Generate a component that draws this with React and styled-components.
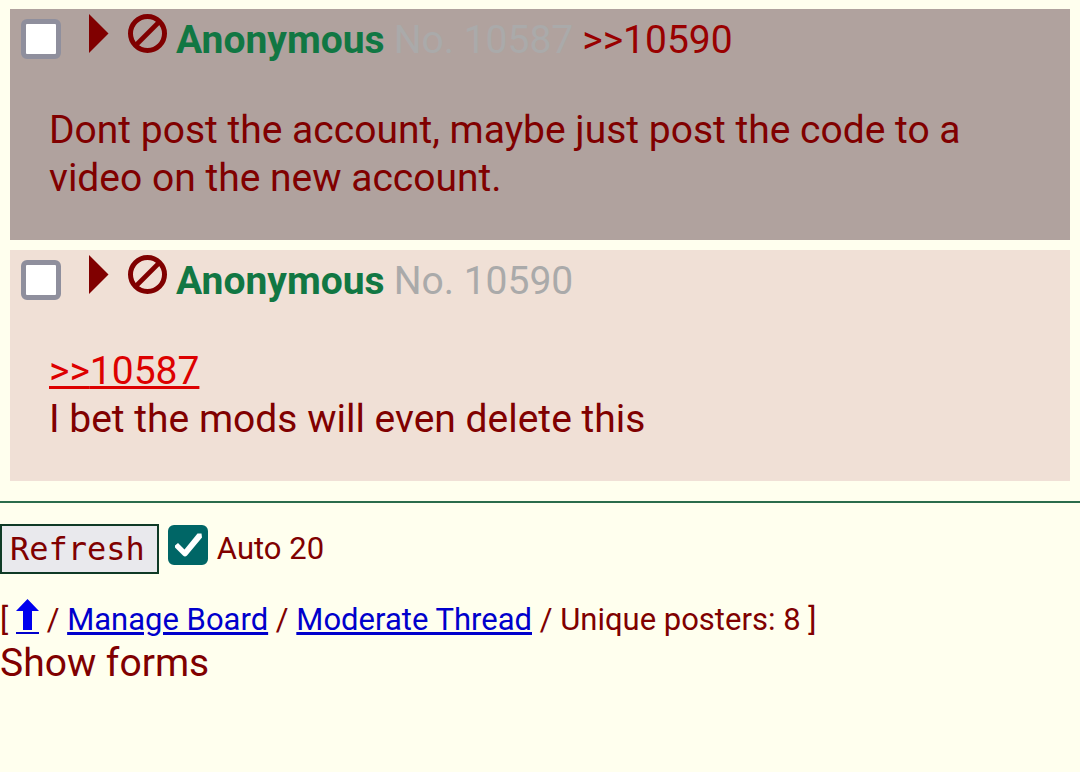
import React, { useState } from "react";
import styled, { createGlobalStyle } from "styled-components";

const posts = [
  {
    id: 10587,
    hovered: true,
    backlinks: [10590],
    text: "Dont post the account, maybe just post the code to a video on the new account.",
  },
  {
    id: 10590,
    quote: 10587,
    text: "I bet the mods will even delete this",
  },
];

const Post = ({ id, hovered, backlinks = [], quote, text }) => {
  return (
    <PostCell id={`p${id}`} $hovered={hovered}>
      <PostHeader>
        <PostCheckbox type="checkbox" aria-label={`Select post ${id}`} />
        <IconButton type="button" aria-label="Post menu">
          <svg width="20" height="40" viewBox="0 0 20 40">
            <path d="M0 0 L19.5 19.5 L0 39 Z" fill="currentColor" />
          </svg>
        </IconButton>
        <IconButton type="button" aria-label="Hide post">
          <svg width="39" height="39" viewBox="0 0 39 39">
            <g fill="none" stroke="currentColor">
              <circle cx="19.5" cy="19.5" r="17" strokeWidth="5" />
              <path d="M7.5 31.5 L31.5 7.5" strokeWidth="4.6" />
            </g>
          </svg>
        </IconButton>
        <PostInfo>
          <Name>Anonymous</Name>
          <NumberLink href={`#p${id}`}>No. {id}</NumberLink>
          {backlinks.map((link) => (
            <Backlink key={link} href={`#p${link}`}>
              &gt;&gt;{link}
            </Backlink>
          ))}
        </PostInfo>
      </PostHeader>
      <Message>
        {quote && (
          <>
            <QuoteLink href={`#p${quote}`}>&gt;&gt;{quote}</QuoteLink>
            <br />
          </>
        )}
        {text}
      </Message>
    </PostCell>
  );
};

const App = () => {
  const [auto, setAuto] = useState(true);

  return (
    <>
      <GlobalStyle />
      <Thread>
        {posts.map((post) => (
          <Post {...post} key={post.id} />
        ))}
      </Thread>
      <Divider />
      <RefreshBar>
        <RefreshButton type="button">Refresh</RefreshButton>
        <AutoLabel>
          <AutoCheckbox>
            <input
              type="checkbox"
              checked={auto}
              onChange={(e) => setAuto(e.target.checked)}
            />
            <svg width="40" height="40" viewBox="0 0 40 40">
              <path
                d="M7 20.5 L10 18 L16.5 24.5 L29.5 8.5 L33.5 8.5 L34 12.5 L19 30.5 Q17 32.5 15 30.5 L7 22.5 Z"
                fill="#fff"
              />
            </svg>
          </AutoCheckbox>
          Auto 20
        </AutoLabel>
      </RefreshBar>
      <ThreadNav>
        [{" "}
        <NavLink href="#top" aria-label="Back to top">
          <svg width="23" height="35" viewBox="0 0 23 33">
            <path d="M11.5 0 L23 12 H16 V31 H7 V12 H0 Z" fill="#0000ee" />
          </svg>
        </NavLink>{" "}
        / <NavLink href="#manage">Manage Board</NavLink> /{" "}
        <NavLink href="#moderate">Moderate Thread</NavLink> / Unique posters: 8
        ]
      </ThreadNav>
      <ShowForms type="button">Show forms</ShowForms>
    </>
  );
};

const GlobalStyle = createGlobalStyle`
  * {
    box-sizing: border-box;
  }
  body {
    margin: 0;
    background: #ffffee;
    color: #800000;
    font-family: Roboto, sans-serif;
    font-size: 39px;
    line-height: 48px;
  }
  button {
    padding: 0;
    border: 0;
    background: none;
    color: inherit;
    font: inherit;
    cursor: pointer;
  }
`;

const Thread = styled.main`
  display: grid;
  gap: 10px;
  padding: 9px 10px 0;
`;

const PostCell = styled.article`
  padding: 0 38px 38px 39px;
  background: ${(props) => (props.$hovered ? "#b0a29e" : "#f0e0d6")};
`;

const PostHeader = styled.header`
  display: flex;
  align-items: flex-start;
  margin-left: -28px;
  padding-top: 5px;
`;

const PostCheckbox = styled.input`
  appearance: none;
  width: 40px;
  height: 40px;
  margin: 5px 28px 0 0;
  border: 5px solid #8f8f9d;
  border-radius: 6px;
  background: #fff;
`;

const IconButton = styled.button`
  display: flex;
  margin-right: 19px;
  & + & {
    margin-right: 9px;
  }
`;

const PostInfo = styled.div`
  display: flex;
  flex-wrap: wrap;
  gap: 0 9px;
  padding-top: 2px;
`;

const Name = styled.span`
  color: #117743;
  font-weight: 700;
`;

const NumberLink = styled.a`
  color: #aaaaaa;
  text-decoration: none;
`;

const Backlink = styled.a`
  color: #990000;
  text-decoration: none;
`;

const Message = styled.p`
  margin: 42px 0 0;
`;

const QuoteLink = styled.a`
  color: #dd0000;
`;

const Divider = styled.hr`
  height: 2px;
  margin: 20px 0 21px;
  border: 0;
  background: #2b6c4b;
`;

const RefreshBar = styled.div`
  display: flex;
  align-items: flex-start;
  gap: 9px;
  font-size: 31px;
  line-height: 50px;
`;

const RefreshButton = styled.button`
  && {
    height: 50px;
    padding: 0 12px 0 8px;
    border: 2px solid #0f3a26;
    background: #e9e9ed;
    font-family: "DejaVu Sans Mono", monospace;
    font-size: 32px;
    line-height: 44px;
  }
`;

const AutoLabel = styled.label`
  display: flex;
  align-items: flex-start;
  gap: 9px;
`;

const AutoCheckbox = styled.span`
  display: grid;
  margin-top: 1px;
  input,
  svg {
    grid-area: 1 / 1;
  }
  input {
    appearance: none;
    width: 40px;
    height: 40px;
    margin: 0;
    border: 5px solid #8f8f9d;
    border-radius: 6px;
    background: #fff;
  }
  input:checked {
    border-color: #006666;
    background: #006666;
  }
  svg {
    pointer-events: none;
  }
  input:not(:checked) + svg {
    visibility: hidden;
  }
`;

const ThreadNav = styled.nav`
  margin-top: 25px;
  font-size: 31px;
  line-height: 40px;
`;

const NavLink = styled.a`
  color: #0000cc;
  svg {
    border-bottom: 2px solid #0000cc;
    vertical-align: -4px;
  }
`;

const ShowForms = styled.button`
  && {
    display: block;
    line-height: 46px;
  }
`;

export default App;
